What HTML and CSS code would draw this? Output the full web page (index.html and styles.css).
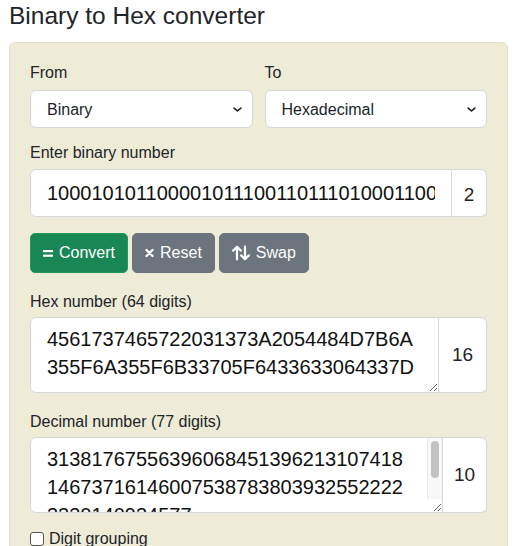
FILE: index.html
```html
<!DOCTYPE html>
<html lang="en">
<head>
<meta charset="utf-8">
<title>Binary to Hex converter</title>
<link rel="stylesheet" href="styles.css">
</head>
<body>
<div class="page">
  <h1 class="title">Binary to Hex converter</h1>
  <div class="card">
    <div class="row">
      <div class="col">
        <label class="lbl lbl-first">From</label>
        <select class="sel"><option>Binary</option></select>
      </div>
      <div class="col">
        <label class="lbl lbl-first">To</label>
        <select class="sel"><option>Hexadecimal</option></select>
      </div>
    </div>

    <label class="lbl lbl-bin">Enter binary number</label>
    <div class="group">
      <input class="ctl ctl-input" type="text" value="1000101011000010111001101110100011001010111001000100000001100010011011100111010">
      <span class="addon addon-bin">2</span>
    </div>

    <div class="btns">
      <button class="btn btn-green"><svg class="ico" width="10" height="16" viewBox="0 0 10 16"><rect x="0" y="5" width="10" height="2.2" fill="#fff"/><rect x="0" y="9.6" width="10" height="2.2" fill="#fff"/></svg>Convert</button>
      <button class="btn btn-gray"><svg class="ico" width="9" height="16" viewBox="0 0 9 16"><path d="M1.5 5 L7.5 11 M7.5 5 L1.5 11" stroke="#fff" stroke-width="2.4" stroke-linecap="round"/></svg>Reset</button>
      <button class="btn btn-gray"><svg class="ico ico-swap" width="18" height="16" viewBox="0 0 18 16"><path d="M5 14.5 V2 M1.2 5.6 L5 1.8 L8.8 5.6" stroke="#fff" stroke-width="2.2" fill="none" stroke-linecap="round" stroke-linejoin="round"/><path d="M13 1.5 V14 M9.2 10.4 L13 14.2 L16.8 10.4" stroke="#fff" stroke-width="2.2" fill="none" stroke-linecap="round" stroke-linejoin="round"/></svg>Swap</button>
    </div>

    <label class="lbl lbl-out">Hex number (64 digits)</label>
    <div class="group">
      <textarea class="ctl ctl-area">4561737465722031373A2054484D7B6A355F6A355F6B33705F6433633064337D</textarea>
      <span class="addon addon-hex">16</span>
    </div>

    <label class="lbl lbl-out">Decimal number (77 digits)</label>
    <div class="group">
      <div class="area-wrap">
        <textarea class="ctl ctl-area ctl-scroll">31381767556396068451396213107418146737161460075387838039325522223330140934577</textarea>
        <div class="sb"><div class="sb-thumb"></div></div>
      </div>
      <span class="addon addon-dec">10</span>
    </div>

    <div class="check">
      <input type="checkbox" class="cb" id="dg">
      <label for="dg" class="cb-lbl">Digit grouping</label>
    </div>
  </div>
</div>
</body>
</html>
```

FILE: styles.css
```css
* { box-sizing: border-box; }

html, body {
  margin: 0;
  padding: 0;
  background: #ffffff;
}

body {
  font-family: "Liberation Sans", Arial, sans-serif;
  color: #212529;
  font-size: 16px;
}

.page {
  padding: 1px 19px 0 9px;
}

.title {
  margin: 0 0 12px 0;
  font-size: 24.5px;
  line-height: 29px;
  font-weight: 400;
  color: #212529;
}

.card {
  width: 499px;
  height: 520px;
  background: #eeebd7;
  border: 1px solid #e2dec8;
  border-radius: 6px;
  padding: 18px 20px 0 20px;
}

.row {
  display: flex;
  gap: 12px;
}

.col {
  flex: 1 1 0;
  display: flex;
  flex-direction: column;
}

.lbl {
  display: block;
  font-size: 16px;
  line-height: 23px;
  color: #212529;
}

.lbl-first { margin-bottom: 6px; }
.lbl-bin { margin-top: 13px; margin-bottom: 5px; }
.lbl-out { margin-top: 17px; margin-bottom: 4px; }

.sel {
  appearance: none;
  -webkit-appearance: none;
  height: 38px;
  width: 100%;
  border: 1px solid #d5d8db;
  border-radius: 6px;
  background-color: #fff;
  background-image: url("data:image/svg+xml,%3csvg xmlns='http://www.w3.org/2000/svg' viewBox='0 0 16 16'%3e%3cpath fill='none' stroke='%23212529' stroke-linecap='round' stroke-linejoin='round' stroke-width='2.4' d='m3 6 5 4 5-4'/%3e%3c/svg%3e");
  background-repeat: no-repeat;
  background-position: right 9px center;
  background-size: 11px 11px;
  padding: 0 30px 0 16px;
  font-family: "Liberation Sans", Arial, sans-serif;
  font-size: 16px;
  color: #212529;
}

.group {
  display: flex;
}

.ctl {
  flex: 1 1 auto;
  min-width: 0;
  border: 1px solid #d5d8db;
  border-radius: 6px 0 0 6px;
  background: #fff;
  font-family: "Liberation Sans", Arial, sans-serif;
  font-size: 20px;
  color: #111;
  padding: 0 16px;
  margin: 0;
}

.ctl-input {
  height: 48px;
}

.ctl-area {
  height: 76px;
  line-height: 28px;
  padding: 7px 16px 8px 16px;
  resize: vertical;
  display: block;
}

.area-wrap {
  position: relative;
  flex: 1 1 auto;
  display: flex;
  min-width: 0;
}

.ctl-scroll {
  width: 100%;
  padding-right: 32px;
  overflow: hidden;
}

.sb {
  position: absolute;
  top: 1px;
  right: 1px;
  bottom: 14px;
  width: 15px;
  background: #f8f8f8;
  border-left: 1px solid #e8e8e8;
}

.sb-thumb {
  margin: 3px 3px 0 3px;
  height: 37px;
  background: #c2c2c2;
  border-radius: 4px;
}

.addon {
  flex: 0 0 auto;
  display: flex;
  align-items: center;
  justify-content: center;
  background: #fff;
  border: 1px solid #d5d8db;
  border-left: 0;
  border-radius: 0 6px 6px 0;
  font-size: 19px;
  color: #212529;
}

.addon-bin { width: 35px; padding-top: 4px; }
.addon-hex { width: 48px; }
.addon-dec { width: 44px; }

.btns {
  display: flex;
  gap: 4px;
  margin-top: 16px;
}

.btn {
  height: 40px;
  display: inline-flex;
  align-items: center;
  padding: 0 12px;
  border-radius: 5px;
  font-family: "Liberation Sans", Arial, sans-serif;
  font-size: 16px;
  color: #fff;
  border: 1px solid transparent;
}

.btn-green {
  background: #198754;
  border-color: #1f9a5b;
}

.btn-gray {
  background: #6c757d;
  border-color: #6c757d;
}

.ico {
  margin-right: 6px;
  display: block;
}

.ico-swap { margin-right: 6px; }

.check {
  display: flex;
  align-items: center;
  margin-top: 14px;
}

.cb {
  appearance: none;
  -webkit-appearance: none;
  width: 14px;
  height: 14px;
  margin: 0 5px 0 0;
  background: #fff;
  border: 1px solid #555;
  border-radius: 3px;
}

.cb-lbl {
  font-size: 16px;
  line-height: 23px;
  color: #212529;
}
```
